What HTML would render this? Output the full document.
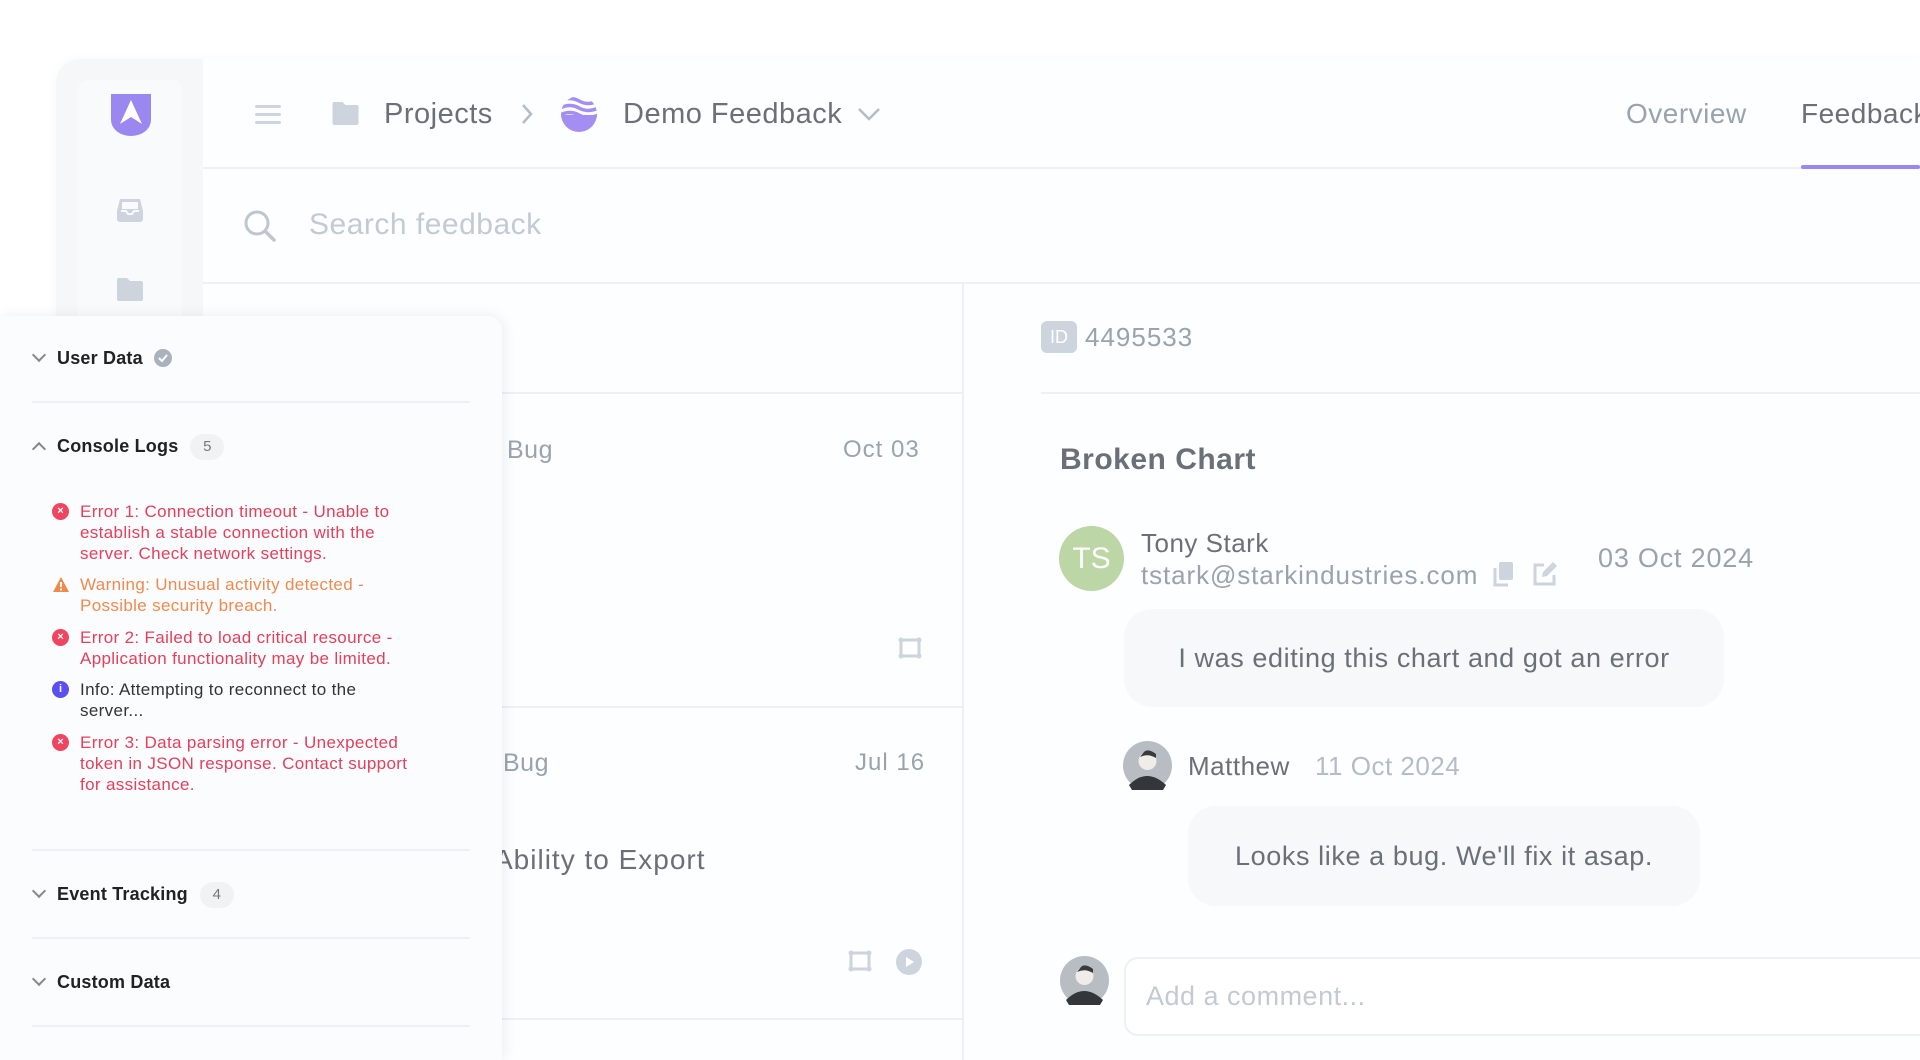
<!DOCTYPE html>
<html><head><meta charset="utf-8"><style>
*{margin:0;padding:0;box-sizing:border-box}
body{width:1920px;height:1060px;overflow:hidden;background:#fff;font-family:"Liberation Sans",sans-serif;position:relative}
.a{position:absolute;white-space:nowrap}
.t{position:absolute;white-space:nowrap;line-height:40px;height:40px;letter-spacing:0.5px}
.hl{position:absolute;height:2px;background:#eef0f3}
.log{position:absolute;left:80px;width:350px;font-size:17px;letter-spacing:0.35px;line-height:21px;white-space:normal}
.ic{position:absolute;left:-28px;top:2px;width:17px;height:17px;border-radius:50%;color:#fff;font-size:11px;line-height:17px;text-align:center;font-weight:bold;letter-spacing:0}
.badge{display:inline-block;width:34px;height:26px;border-radius:13px;background:#f1f2f4;color:#777;font-size:15px;line-height:26px;text-align:center;margin-left:12px;font-weight:normal;vertical-align:middle}
.sec{position:absolute;left:34px;font-size:18px;font-weight:bold;color:#222;line-height:30px;letter-spacing:0.2px}
.chev{display:inline-block;width:10px;height:10px;border-right:2px solid #888;border-bottom:2px solid #888;transform:rotate(45deg);margin-right:13px;position:relative;top:-4px}
.chevu{transform:rotate(-135deg);top:2px}
</style></head><body>
<div class="a" style="left:56px;top:59px;width:1864px;height:1001px;background:#fdfeff;border-top-left-radius:24px;box-shadow:0 0 12px rgba(0,0,0,0.03)"></div>
<div class="a" style="left:56px;top:59px;width:147px;height:1001px;background:#f5f7f9;border-top-left-radius:24px"></div>
<div class="a" style="left:78px;top:80px;width:104px;height:980px;background:#f9fafb;border-radius:10px"></div>
<svg class="a" style="left:109px;top:92px" width="44" height="44" viewBox="0 0 44 44"><path d="M2 2 H42 V28 A20 16 0 0 1 2 28 Z" fill="#9b87f0"/><path d="M22 8 L33 32 L22 25 L11 32 Z" fill="#fff"/></svg>
<svg class="a" style="left:116px;top:197px" width="28" height="26" viewBox="0 0 28 26"><path d="M4 2 H24 L27 14 V22 A3 3 0 0 1 24 25 H4 A3 3 0 0 1 1 22 V14 Z" fill="#cdd4dd"/><path d="M5 14 H10 L12 17 H16 L18 14 H23" stroke="#f9fafb" stroke-width="2" fill="none"/><rect x="6" y="5" width="16" height="7" fill="#f9fafb"/></svg>
<svg class="a" style="left:116px;top:277px" width="28" height="25" viewBox="0 0 28 25"><path d="M1 3 A2 2 0 0 1 3 1 H11 L14 4 H25 A2 2 0 0 1 27 6 V22 A2 2 0 0 1 25 24 H3 A2 2 0 0 1 1 22 Z" fill="#cdd4dd"/></svg>
<div class="hl" style="left:203px;top:167px;width:1717px"></div>
<svg class="a" style="left:255px;top:103px" width="26" height="22"><rect x="0" y="2" width="26" height="3" rx="1.5" fill="#cdd4dd"/><rect x="0" y="10" width="26" height="3" rx="1.5" fill="#cdd4dd"/><rect x="0" y="18" width="26" height="3" rx="1.5" fill="#cdd4dd"/></svg>
<svg class="a" style="left:331px;top:101px" width="29" height="25" viewBox="0 0 28 25"><path d="M1 3 A2 2 0 0 1 3 1 H11 L14 4 H25 A2 2 0 0 1 27 6 V22 A2 2 0 0 1 25 24 H3 A2 2 0 0 1 1 22 Z" fill="#cdd4dd"/></svg>
<div class="t" style="left:384px;top:94px;font-size:29px;color:#6b7078">Projects</div>
<svg class="a" style="left:520px;top:102px" width="14" height="24"><path d="M3 3 L11 12 L3 21" stroke="#b5bcc6" stroke-width="2.5" fill="none"/></svg>
<svg class="a" style="left:560px;top:95px" width="38" height="38" viewBox="0 0 38 38"><defs><clipPath id="c"><circle cx="19" cy="19" r="18"/></clipPath></defs><g clip-path="url(#c)"><rect x="0" y="20" width="38" height="18" fill="#a48ef2"/><path d="M0 6 Q10 1 19 6 T38 6" stroke="#a48ef2" stroke-width="3.5" fill="none"/><path d="M0 13 Q10 8 19 13 T38 13" stroke="#a48ef2" stroke-width="3.5" fill="none"/><path d="M0 20 Q10 15 19 20 T38 20" stroke="#a48ef2" stroke-width="3.5" fill="none"/></g></svg>
<div class="t" style="left:623px;top:94px;font-size:29px;color:#6b7078">Demo Feedback</div>
<svg class="a" style="left:857px;top:106px" width="24" height="16"><path d="M2 3 L12 13 L22 3" stroke="#b5bcc6" stroke-width="2.5" fill="none"/></svg>
<div class="t" style="left:1626px;top:94px;font-size:28px;color:#9aa2ad">Overview</div>
<div class="t" style="left:1801px;top:94px;font-size:28px;color:#6b7078">Feedback</div>
<div class="a" style="left:1801px;top:165px;width:119px;height:4px;background:#9b87f0;border-radius:2px"></div>
<svg class="a" style="left:242px;top:208px" width="36" height="36"><circle cx="15" cy="15" r="11" stroke="#bfc6cf" stroke-width="3" fill="none"/><path d="M23 23 L32 32" stroke="#bfc6cf" stroke-width="3.5" stroke-linecap="round"/></svg>
<div class="t" style="left:309px;top:205px;font-size:30px;color:#c3cad3">Search feedback</div>
<div class="hl" style="left:203px;top:282px;width:1717px"></div>
<div class="a" style="left:962px;top:283px;width:2px;height:777px;background:#eef0f3"></div>
<div class="hl" style="left:480px;top:392px;width:482px"></div>
<div class="t" style="left:507px;top:430px;font-size:25px;color:#9aa2ad">Bug</div>
<div class="t" style="left:843px;top:430px;font-size:24px;color:#9aa2ad;letter-spacing:1px">Oct 03</div>
<svg class="a" style="left:898px;top:637px" width="24" height="22"><rect x="3" y="3" width="18" height="16" stroke="#cdd4dd" stroke-width="3" fill="none"/><circle cx="3" cy="3" r="2.5" fill="#cdd4dd"/><circle cx="21" cy="3" r="2.5" fill="#cdd4dd"/><circle cx="3" cy="19" r="2.5" fill="#cdd4dd"/><circle cx="21" cy="19" r="2.5" fill="#cdd4dd"/></svg>
<div class="hl" style="left:480px;top:706px;width:482px"></div>
<div class="t" style="left:503px;top:743px;font-size:25px;color:#9aa2ad">Bug</div>
<div class="t" style="left:855px;top:743px;font-size:24px;color:#9aa2ad;letter-spacing:1px">Jul 16</div>
<div class="t" style="left:494px;top:840px;font-size:28px;color:#6b7078;letter-spacing:1px">Ability to Export</div>
<svg class="a" style="left:848px;top:950px" width="24" height="22"><rect x="3" y="3" width="18" height="16" stroke="#cdd4dd" stroke-width="3" fill="none"/><circle cx="3" cy="3" r="2.5" fill="#cdd4dd"/><circle cx="21" cy="3" r="2.5" fill="#cdd4dd"/><circle cx="3" cy="19" r="2.5" fill="#cdd4dd"/><circle cx="21" cy="19" r="2.5" fill="#cdd4dd"/></svg>
<svg class="a" style="left:896px;top:949px" width="26" height="26"><circle cx="13" cy="13" r="13" fill="#cdd4dd"/><path d="M10 8 L18 13 L10 18 Z" fill="#fff"/></svg>
<div class="hl" style="left:480px;top:1018px;width:482px"></div>
<div class="a" style="left:1041px;top:321px;width:36px;height:32px;border-radius:6px;background:#cdd4dd;color:#fff;font-size:18px;line-height:32px;text-align:center">ID</div>
<div class="t" style="left:1085px;top:317px;font-size:26px;color:#9aa2ad;letter-spacing:1px">4495533</div>
<div class="hl" style="left:1041px;top:392px;width:879px"></div>
<div class="t" style="left:1060px;top:440px;font-size:30px;font-weight:bold;color:#6b7078">Broken Chart</div>
<div class="a" style="left:1059px;top:526px;width:65px;height:65px;border-radius:50%;background:#bcd6a5;color:#fff;font-size:30px;line-height:65px;text-align:center">TS</div>
<div class="t" style="left:1141px;top:523px;font-size:26px;color:#6b7078">Tony Stark</div>
<div class="t" style="left:1141px;top:555px;font-size:26px;color:#9aa2ad;letter-spacing:0.9px">tstark@starkindustries.com</div>
<svg class="a" style="left:1492px;top:561px" width="24" height="27"><rect x="7" y="1" width="14" height="18" rx="2" fill="#cdd4dd"/><path d="M3 7 V24 H16" stroke="#cdd4dd" stroke-width="3" fill="none"/></svg>
<svg class="a" style="left:1531px;top:560px" width="28" height="28"><path d="M13 5 H4 V24 H23 V15" stroke="#cdd4dd" stroke-width="3" fill="none"/><path d="M11 17 L12 12 L22 2 L26 6 L16 16 Z" fill="#cdd4dd"/></svg>
<div class="t" style="left:1598px;top:538px;font-size:27px;color:#9aa2ad;letter-spacing:0.8px">03 Oct 2024</div>
<div class="a" style="left:1124px;top:609px;width:600px;height:98px;border-radius:28px;background:#f6f8fa"></div>
<div class="t" style="left:1124px;top:638px;width:600px;text-align:center;font-size:27px;color:#6b7078;letter-spacing:0.6px">I was editing this chart and got an error</div>
<svg class="a" style="left:1123px;top:741px" width="49" height="49"><circle cx="24.5" cy="24.5" r="24.5" fill="#b8bdc3"/><circle cx="24.5" cy="20" r="9" fill="#f0ece8"/><path d="M21 11 Q25 7 33 13 L33 17 Q25 12 17 16 Z" fill="#3a3a3a"/><path d="M6 44 Q24 26 43 44 L40 49 H9 Z" fill="#33363a"/></svg>
<div class="t" style="left:1188px;top:746px;font-size:26px;color:#6b7078">Matthew</div>
<div class="t" style="left:1315px;top:746px;font-size:26px;color:#b5bcc6">11 Oct 2024</div>
<div class="a" style="left:1188px;top:806px;width:512px;height:100px;border-radius:28px;background:#f6f8fa"></div>
<div class="t" style="left:1188px;top:836px;width:512px;text-align:center;font-size:27px;color:#6b7078;letter-spacing:0.6px">Looks like a bug. We'll fix it asap.</div>
<svg class="a" style="left:1060px;top:956px" width="49" height="49"><circle cx="24.5" cy="24.5" r="24.5" fill="#b8bdc3"/><circle cx="24.5" cy="20" r="9" fill="#f0ece8"/><path d="M21 11 Q25 7 33 13 L33 17 Q25 12 17 16 Z" fill="#3a3a3a"/><path d="M6 44 Q24 26 43 44 L40 49 H9 Z" fill="#33363a"/></svg>
<div class="a" style="left:1124px;top:957px;width:820px;height:79px;border-radius:14px;border:2px solid #eef0f3;background:#fff"></div>
<div class="t" style="left:1146px;top:976px;font-size:27px;color:#c3cad3">Add a comment...</div>
<div class="a" style="left:0;top:316px;width:502px;height:744px;background:#fbfcfd;border-top-right-radius:14px;box-shadow:2px 0 14px rgba(0,0,0,0.07)"></div>
<div class="sec" style="top:343px"><span class="chev"></span>User Data <svg width="18" height="18" style="vertical-align:-3px;margin-left:6px"><circle cx="9" cy="9" r="9" fill="#aab2bc"/><path d="M5 9 L8 12 L13 6" stroke="#fff" stroke-width="2" fill="none"/></svg></div>
<div class="hl" style="left:32px;top:401px;width:438px"></div>
<div class="sec" style="top:431px"><span class="chev chevu"></span>Console Logs<span class="badge">5</span></div>
<div class="log" style="top:501px;color:#e3405c"><div class="ic" style="background:#ef4560">×</div>Error 1: Connection timeout - Unable to establish a stable connection with the server. Check network settings.</div>
<div class="log" style="top:574px;color:#ef8a4f"><svg class="ic" style="border-radius:0" width="18" height="17"><path d="M9 1 L17 16 H1 Z" fill="#f08a4b"/><rect x="8" y="6" width="2" height="5" fill="#fff"/><rect x="8" y="12.5" width="2" height="2" fill="#fff"/></svg>Warning: Unusual activity detected - Possible security breach.</div>
<div class="log" style="top:627px;color:#e3405c"><div class="ic" style="background:#ef4560">×</div>Error 2: Failed to load critical resource - Application functionality may be limited.</div>
<div class="log" style="top:679px;color:#333;width:320px"><div class="ic" style="background:#5b4ff0;font-size:11px">i</div>Info: Attempting to reconnect to the server...</div>
<div class="log" style="top:732px;color:#e3405c"><div class="ic" style="background:#ef4560">×</div>Error 3: Data parsing error - Unexpected token in JSON response. Contact support for assistance.</div>
<div class="hl" style="left:32px;top:849px;width:438px"></div>
<div class="sec" style="top:879px"><span class="chev"></span>Event Tracking<span class="badge">4</span></div>
<div class="hl" style="left:32px;top:937px;width:438px"></div>
<div class="sec" style="top:967px"><span class="chev"></span>Custom Data</div>
<div class="hl" style="left:32px;top:1025px;width:438px"></div>
</body></html>
